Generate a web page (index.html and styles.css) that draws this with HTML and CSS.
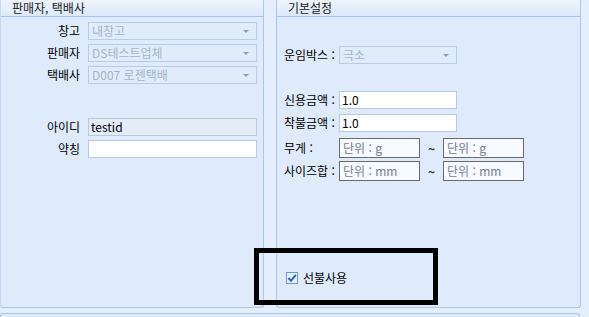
FILE: index.html
```html
<!DOCTYPE html>
<html lang="ko">
<head>
<meta charset="utf-8">
<link rel="stylesheet" href="styles.css">
</head>
<body>
<div class="page">
  <div class="panels">
    <section class="panel panel-left">
      <div class="ph">판매자, 택배사</div>
      <div class="form-l">
        <span class="lbl">창고</span>
        <div class="combo"><span>내창고</span><i class="arr"></i></div>
        <span class="lbl">판매자</span>
        <div class="combo"><span>DS테스트업체</span><i class="arr"></i></div>
        <span class="lbl">택배사</span>
        <div class="combo"><span>D007 로젠택배</span><i class="arr"></i></div>
        <span class="lbl sp">아이디</span>
        <div class="txt ro sp">testid</div>
        <span class="lbl">약칭</span>
        <div class="txt"></div>
      </div>
    </section>
    <section class="panel panel-right">
      <div class="ph ph-r">기본설정</div>
      <div class="form-r">
        <div class="row r-box">
          <span class="rl">운임박스 :</span>
          <div class="combo combo-r"><span>극소</span><i class="arr"></i></div>
        </div>
        <div class="row r-credit">
          <span class="rl">신용금액 :</span>
          <div class="txt txt-r">1.0</div>
        </div>
        <div class="row r-cod">
          <span class="rl">착불금액 :</span>
          <div class="txt txt-r">1.0</div>
        </div>
        <div class="row r-range">
          <span class="rl">무게 :</span>
          <div class="unit">단위 : g</div>
          <span class="tilde">~</span>
          <div class="unit">단위 : g</div>
        </div>
        <div class="row r-range2">
          <span class="rl">사이즈합 :</span>
          <div class="unit">단위 : mm</div>
          <span class="tilde">~</span>
          <div class="unit">단위 : mm</div>
        </div>
        <label class="chk-row">
          <span class="chk"><svg width="10" height="10" viewBox="0 0 10 10"><path d="M1.5 5 L4 7.8 L8.8 1.8" fill="none" stroke="#2a5fb8" stroke-width="1.9"/></svg></span>
          <span>선불사용</span>
        </label>
      </div>
    </section>
  </div>
  <div class="bottom-panel"></div>
  <div class="annot"></div>
</div>
</body>
</html>
```
FILE: styles.css
```css
* { box-sizing: border-box; }
html, body { margin: 0; padding: 0; }
body {
  background: #e4eefc;
  font-family: "Noto Sans CJK KR", "Noto Sans", sans-serif;
  font-size: 12px;
  color: #000;
  width: 589px;
  height: 317px;
  overflow: hidden;
}
.page { position: relative; width: 589px; height: 317px; }
.panels { display: flex; gap: 12px; height: 308px; }
.panel {
  background: #dfebfb;
  border: 1px solid #aac6ea;
  border-top: none;
  border-radius: 0 0 3px 3px;
  height: 308px;
}
.panel-left { width: 264px; border-left-color: #c5d8f1; }
.panel-right { width: 305px; }
.ph {
  height: 17px;
  line-height: 16px;
  padding-left: 11px;
  background: linear-gradient(#eef4fd, #dce9fa);
  border-bottom: 1px solid #a5c4ec;
  color: #1a1a1a;
  font-size: 12px;
}
.ph-r { padding-left: 11px; }

.form-l {
  display: grid;
  grid-template-columns: 79px 169px;
  column-gap: 8px;
  row-gap: 4px;
  padding-top: 5px;
  align-items: center;
}
.lbl { text-align: right; font-size: 12px; line-height: 18px; }
.sp { margin-top: 30px; }
.combo {
  height: 18px;
  border: 1px solid #b8cce6;
  background: #e1ecfb;
  color: #a7b3c3;
  display: flex;
  align-items: center;
  justify-content: space-between;
  padding: 0 7px 0 3px;
  line-height: 16px;
}
.arr {
  width: 0; height: 0;
  border-left: 3px solid transparent;
  border-right: 3px solid transparent;
  border-top: 3px solid #8d9db3;
}
.txt {
  height: 18px;
  border: 1px solid #b3c9e6;
  background: #fff;
  padding: 0 2px;
  line-height: 16px;
  color: #000;
}
.ro { background: #e5ecf6; }

.form-r { padding: 29px 0 0 7px; display: flex; flex-direction: column; }
.row { display: flex; align-items: center; }
.rl { width: 55px; flex: none; line-height: 18px; }
.combo-r { width: 118px; }
.txt-r { width: 118px; }
.r-credit { margin-top: 27px; }
.r-cod { margin-top: 5px; }
.r-range { margin-top: 6px; }
.r-range2 { margin-top: 3px; }
.unit {
  width: 81px;
  height: 20px;
  border: 1px solid #6a6a6a;
  background: #f7faff;
  color: #75808f;
  line-height: 18px;
  padding-left: 3px;
}
.tilde { width: 23px; text-align: center; font-size: 12px; font-weight: bold; color: #333; }
.chk-row { display: flex; align-items: center; gap: 5px; margin-top: 88px; margin-left: 2px; }
.chk {
  width: 12px; height: 12px;
  border: 1px solid #6f98d3;
  background: #e6effc;
  display: flex; align-items: center; justify-content: center;
}
.bottom-panel {
  margin-top: 5px;
  height: 10px;
  width: 580px;
  border: 1px solid #aac6ea;
  border-bottom: none;
  border-radius: 3px 3px 0 0;
  background: #dfebfb;
}
.annot {
  position: absolute;
  left: 254px; top: 248px;
  width: 184px; height: 57px;
  border: 5px solid #000;
}
```
